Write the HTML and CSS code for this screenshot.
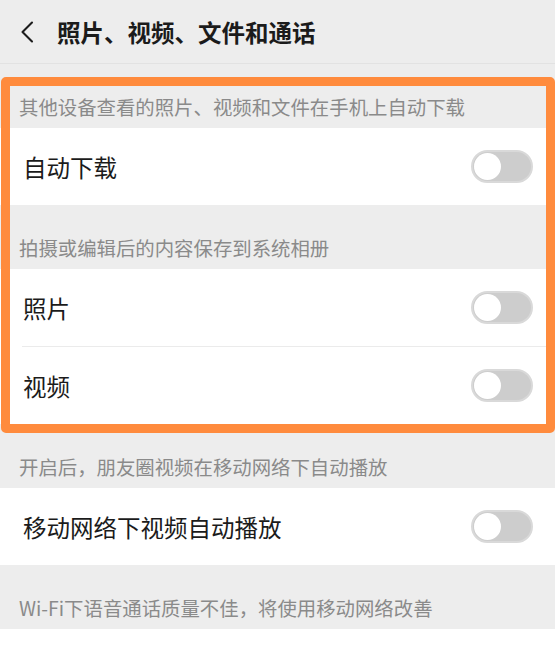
FILE: index.html
```html
<!DOCTYPE html>
<html lang="zh-CN">
<head>
<meta charset="utf-8">
<title>照片、视频、文件和通话</title>
<link rel="stylesheet" href="styles.css">
</head>
<body>
<div class="page">
  <header class="topbar">
    <svg class="back" width="14" height="22" viewBox="0 0 14 22" aria-hidden="true">
      <path d="M12 1.5 L2.5 11 L12 20.5" fill="none" stroke="#1c1c1c" stroke-width="2.1" stroke-linecap="round" stroke-linejoin="round"/>
    </svg>
    <h1 class="title">照片、视频、文件和通话</h1>
  </header>

  <div class="section-title">其他设备查看的照片、视频和文件在手机上自动下载</div>
  <div class="group">
    <div class="row"><span class="label">自动下载</span><span class="switch"><span class="knob"></span></span></div>
  </div>

  <div class="section-title">拍摄或编辑后的内容保存到系统相册</div>
  <div class="group">
    <div class="row"><span class="label">照片</span><span class="switch"><span class="knob"></span></span></div>
    <div class="divider"></div>
    <div class="row"><span class="label">视频</span><span class="switch"><span class="knob"></span></span></div>
  </div>

  <div class="section-title">开启后，朋友圈视频在移动网络下自动播放</div>
  <div class="group">
    <div class="row"><span class="label">移动网络下视频自动播放</span><span class="switch"><span class="knob"></span></span></div>
  </div>

  <div class="section-title">Wi-Fi下语音通话质量不佳，将使用移动网络改善</div>
  <div class="group">
    <div class="row"></div>
  </div>

  <div class="highlight"></div>
</div>
</body>
</html>
```

FILE: styles.css
```css
html, body {
  margin: 0;
  padding: 0;
  overflow: hidden;
}

body {
  background: #ededed;
  font-family: "Noto Sans CJK SC", "Noto Sans", sans-serif;
  color: #1b1b1b;
}

.page {
  position: relative;
  width: 555px;
}

.topbar {
  height: 64px;
  display: flex;
  align-items: center;
  padding-left: 20px;
  border-bottom: 1px solid #e2e2e2;
  box-sizing: border-box;
}

.back {
  display: block;
}

.title {
  margin: 0 0 0 23px;
  font-size: 23.5px;
  font-weight: bold;
  line-height: 30px;
  color: #1b1b1b;
}

.section-title {
  height: 64px;
  box-sizing: border-box;
  display: flex;
  align-items: flex-end;
  padding: 0 19px 10px 19px;
  font-size: 19.4px;
  line-height: 22px;
  color: #8a8a8a;
}

.group {
  background: #ffffff;
}

.row {
  height: 77px;
  display: flex;
  align-items: center;
  justify-content: space-between;
  padding: 0 22px 0 23px;
}

.label {
  font-size: 23.5px;
  line-height: 30px;
  color: #1b1b1b;
}

.divider {
  height: 1px;
  margin-left: 22px;
  background: #ebebeb;
}

.switch {
  width: 62px;
  height: 33px;
  box-sizing: border-box;
  border-radius: 17px;
  background: #cdcdcd;
  border: 2px solid #d9d9d9;
  display: flex;
  align-items: center;
  padding-left: 1px;
}

.knob {
  width: 27px;
  height: 27px;
  border-radius: 50%;
  background: #ffffff;
}

.highlight {
  position: absolute;
  left: 1px;
  top: 77px;
  width: 554px;
  height: 356px;
  box-sizing: border-box;
  border: 9px solid #ff8b3d;
  border-radius: 5px;
  pointer-events: none;
}
```
